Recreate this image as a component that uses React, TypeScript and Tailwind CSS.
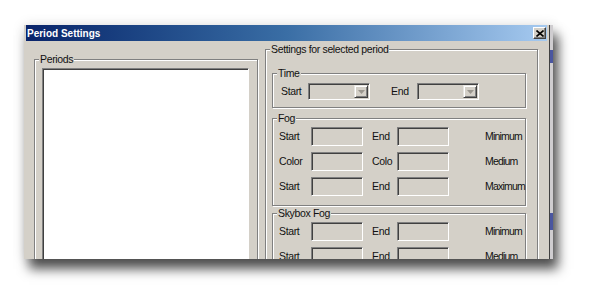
import React from 'react';

const font = { fontFamily: '"Liberation Sans", Arial, sans-serif' };

// sunken edit box, disabled look
function EditBox() {
  return (
    <div className="h-[19px] w-[52px] shrink-0 border border-t-[#808080] border-l-[#808080] border-b-white border-r-white bg-[#d4d0c8] shadow-[inset_1px_1px_0_#404040,inset_-1px_-1px_0_#d4d0c8]" />
  );
}

function Combo() {
  return (
    <div className="flex h-[17px] w-[62px] shrink-0 justify-end border border-t-[#808080] border-l-[#808080] border-b-white border-r-white bg-[#d4d0c8] shadow-[inset_1px_1px_0_#404040,inset_-1px_-1px_0_#d4d0c8] p-[1px]">
      <div className="flex w-[14px] items-center justify-center border border-t-[#e8e6e1] border-l-[#e8e6e1] border-b-[#404040] border-r-[#404040] bg-[#d4d0c8] shadow-[inset_1px_1px_0_#fff,inset_-1px_-1px_0_#808080]">
        <svg width="7" height="4" viewBox="0 0 7 4">
          <path d="M0 0h7L3.5 4z" fill="#9a968e" />
        </svg>
      </div>
    </div>
  );
}

function Group({ title, className, children }: { title: string; className?: string; children: React.ReactNode }) {
  return (
    <fieldset className={`border border-[#808080] shadow-[inset_1px_1px_0_#fff,1px_1px_0_#fff] ${className ?? ''}`}>
      <legend className="ml-[4px] bg-[#d4d0c8] px-[1px] leading-[13px]">{title}</legend>
      {children}
    </fieldset>
  );
}

function FogRow({ a, b, note }: { a: string; b: string; note: string }) {
  return (
    <div className="flex h-[19px] items-center">
      <span className="w-[32px]">{a}</span>
      <EditBox />
      <span className="ml-[9px] w-[25px]">{b}</span>
      <EditBox />
      <span className="ml-[36px] tracking-[-0.8px]">{note}</span>
    </div>
  );
}

export default function App() {
  return (
    <div className="h-[302px] w-[596px] overflow-hidden bg-white pl-[24px] pt-[25px] text-[10.5px] tracking-[-0.35px] text-[#111]" style={font}>
      <div className="flex h-[234px] w-[529px] shadow-[5px_10px_11px_rgba(0,0,0,0.68),0_0_12px_rgba(0,0,0,0.12)]">
        {/* dialog */}
        <div className="flex h-full w-[526px] flex-col overflow-hidden border-r border-r-[#404040] bg-[#d4d0c8] px-[2px]">
          <div className="flex h-[16px] shrink-0 items-center justify-between bg-linear-to-r from-[#0a246a] via-[#3a6ea5] to-[#a6caf0] pl-[1px] pr-[1px]">
            <span className="text-[10px] font-bold tracking-normal text-white">Period Settings</span>
            <button className="flex h-[12px] w-[13px] items-center justify-center border border-t-white border-l-white border-b-[#404040] border-r-[#404040] bg-[#d4d0c8] shadow-[inset_-1px_-1px_0_#808080]">
              <svg width="8" height="7" viewBox="0 0 8 7">
                <path d="M0.5 0.5l7 6M7.5 0.5l-7 6" stroke="#000" strokeWidth="1.6" />
              </svg>
            </button>
          </div>

          <div className="flex items-start pl-[8px]">
            <Group title="Periods" className="mt-[12px] w-[224px]">
              <div className="pl-[7px] pr-[8px] pt-[2px]">
                <div className="h-[200px] border border-t-[#808080] border-l-[#808080] border-b-white border-r-white bg-white shadow-[inset_1px_1px_0_#404040]" />
              </div>
            </Group>

            <Group title="Settings for selected period" className="ml-[7px] mt-[2px] w-[273px]">
              <div className="flex flex-col pl-[6px] pt-[11px]">
                <Group title="Time" className="w-[254px]">
                  <div className="flex items-center pb-[7px] pl-[8px] pt-[3px]">
                    <span className="w-[27px]">Start</span>
                    <Combo />
                    <span className="ml-[21px] w-[26px]">End</span>
                    <Combo />
                  </div>
                </Group>

                <Group title="Fog" className="mt-[4px] w-[254px]">
                  <div className="flex flex-col gap-[6px] pb-[9px] pl-[6px] pt-[2px]">
                    <FogRow a="Start" b="End" note="Minimum" />
                    <FogRow a="Color" b="Colo" note="Medium" />
                    <FogRow a="Start" b="End" note="Maximum" />
                  </div>
                </Group>

                <Group title="Skybox Fog" className="mt-[1px] w-[254px]">
                  <div className="flex flex-col gap-[6px] pb-[9px] pl-[6px] pt-[2px]">
                    <FogRow a="Start" b="End" note="Minimum" />
                    <FogRow a="Start" b="End" note="Medium" />
                  </div>
                </Group>
              </div>
            </Group>
          </div>
        </div>

        {/* sliver of the window behind */}
        <div className="flex h-full w-[3px] flex-col bg-[#cfcdd0]">
          <div className="mt-[25px] h-[13px] bg-[#4a56a0]" />
          <div className="mt-[150px] h-[17px] bg-[#4a56a0]" />
        </div>
      </div>
    </div>
  );
}
